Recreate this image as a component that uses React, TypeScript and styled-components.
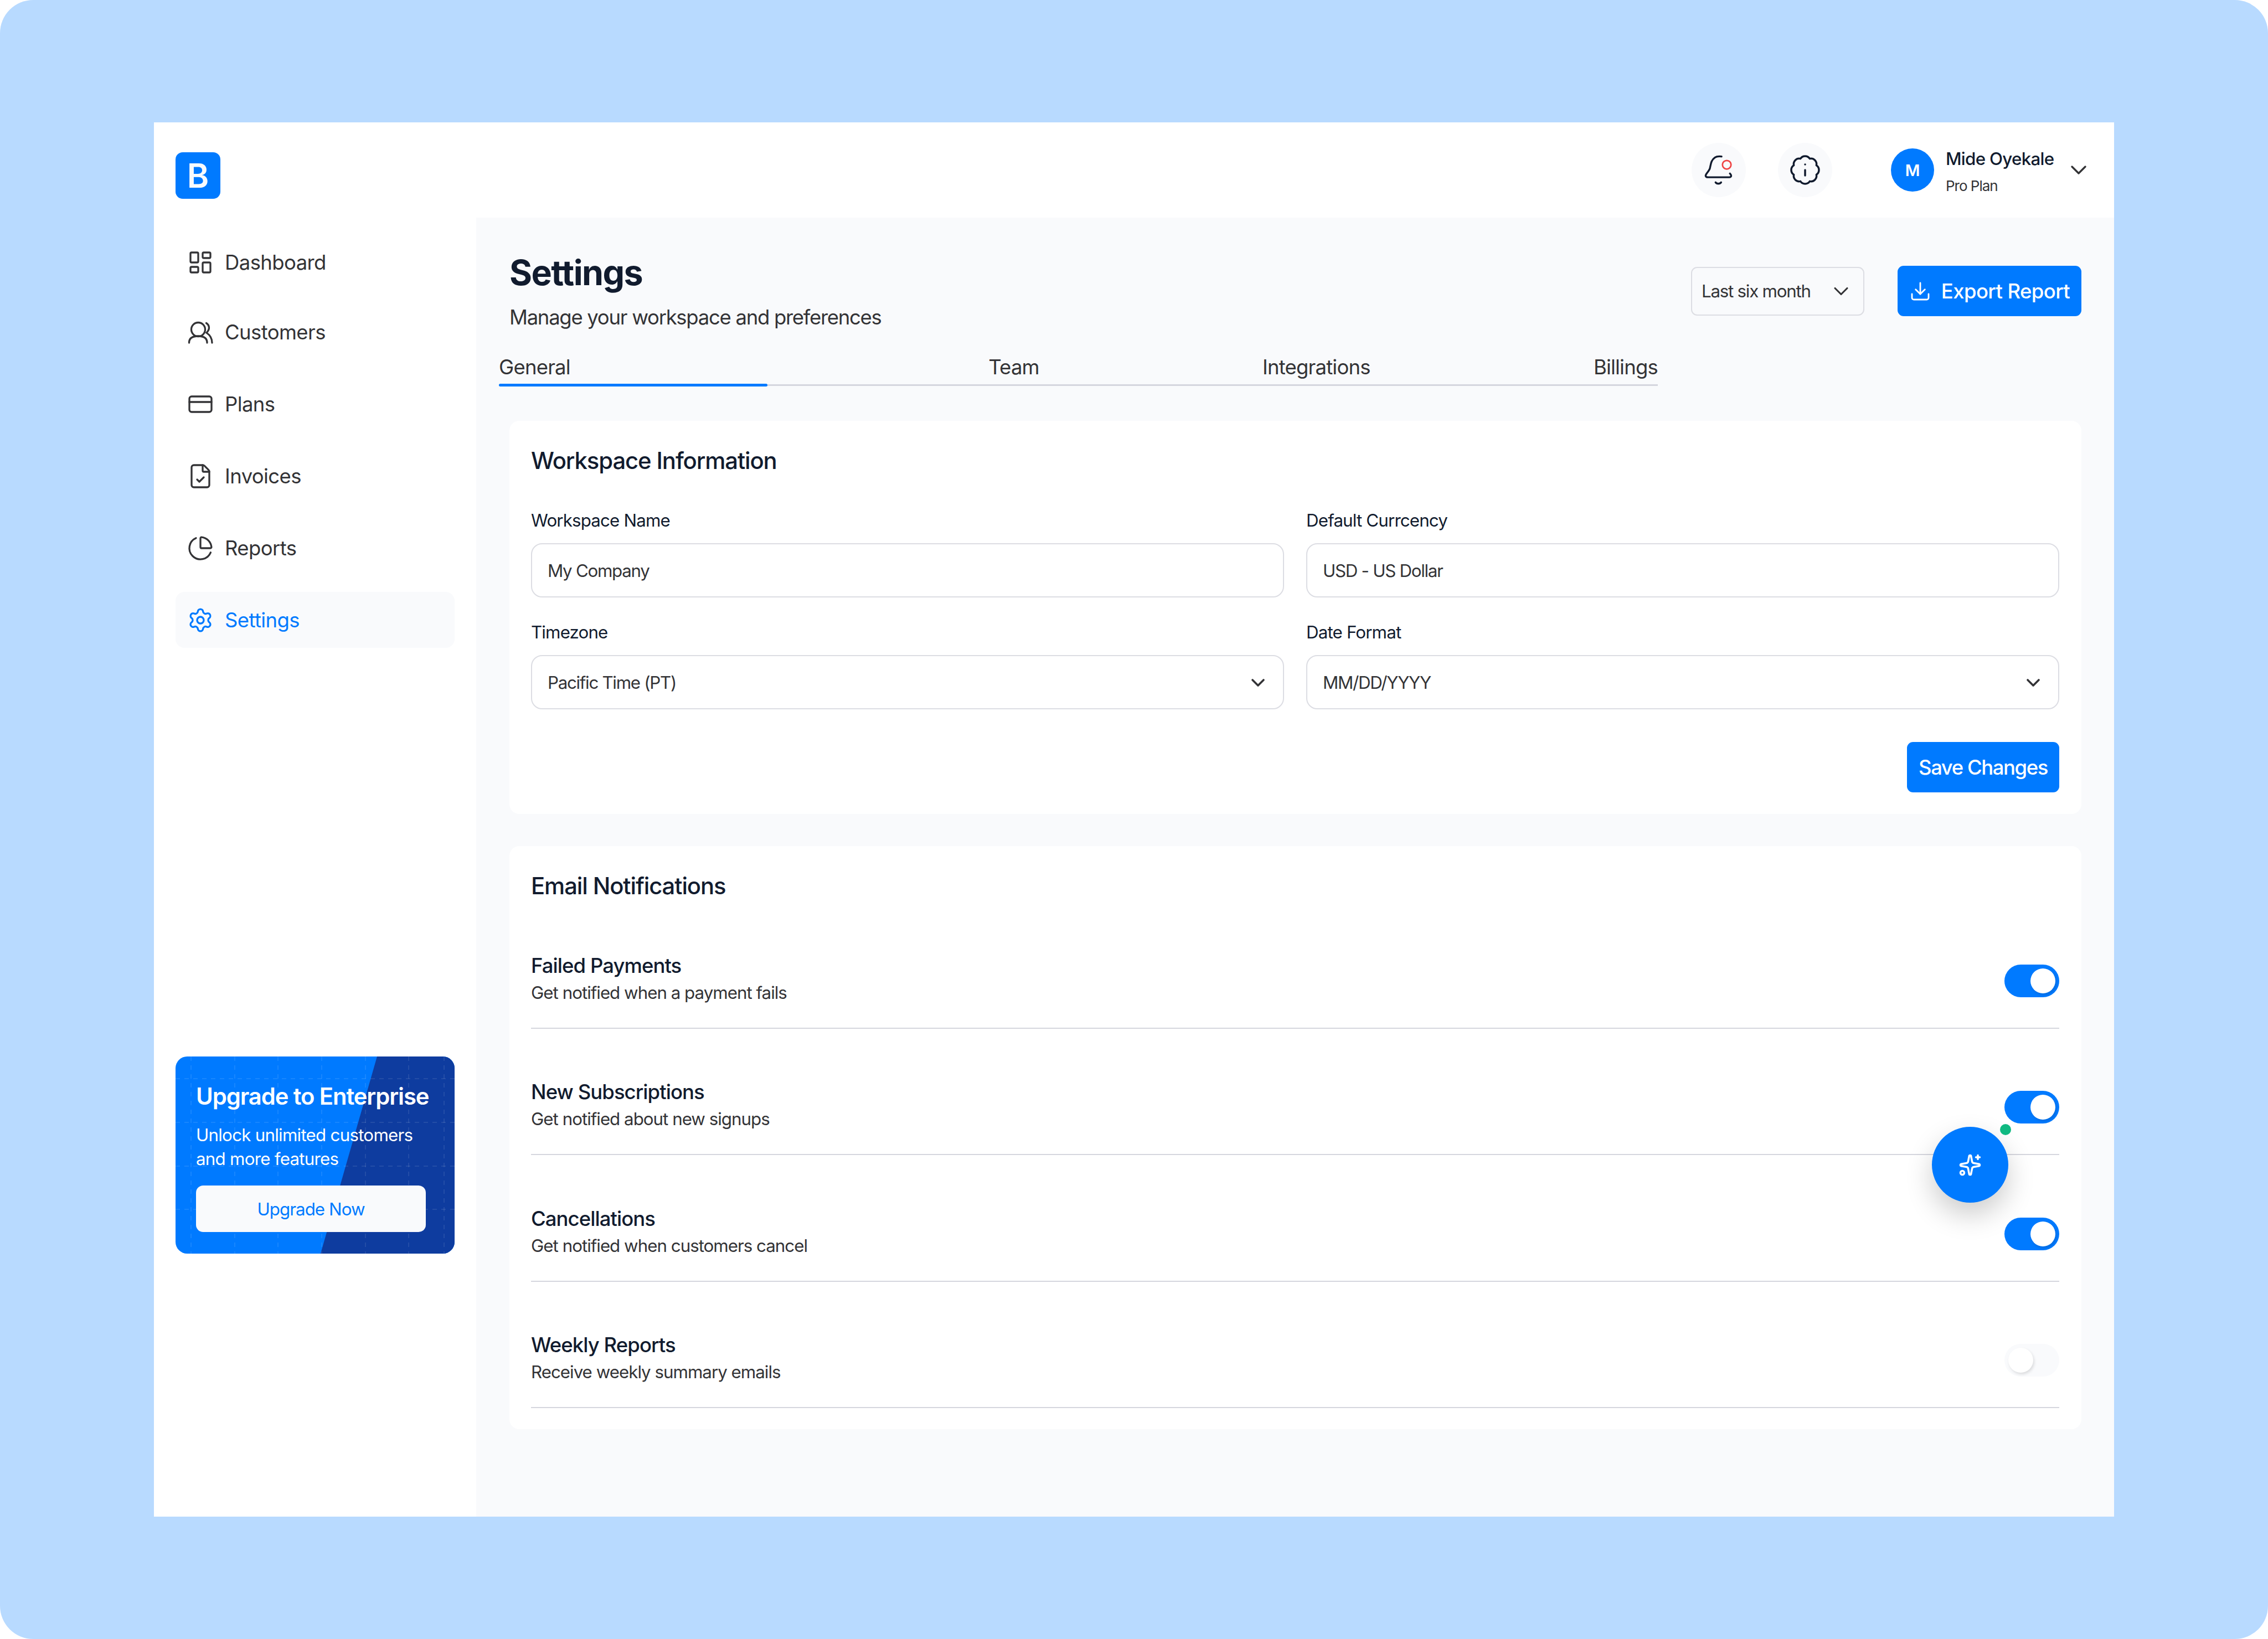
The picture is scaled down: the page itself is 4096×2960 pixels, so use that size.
import React from 'react';
import styled, { createGlobalStyle } from 'styled-components';
import {
  BadgeInfo,
  ChartPie,
  ChevronDown,
  CreditCard,
  Download,
  FileCheck,
  LayoutDashboard,
  Settings,
  Sparkles,
} from 'lucide-react';

const BLUE = '#007aff';
const INK = '#111b2e';
const BODY = '#333336';
const LINE = '#d5d6de';
const SOFT_LINE = '#dcdde3';
const PANEL = '#f9fafc';

const GlobalStyle = createGlobalStyle`
  html, body {
    margin: 0;
    padding: 0;
    background: #fff;
  }
  * {
    box-sizing: border-box;
  }
  body {
    font-family: Inter, "Liberation Sans", sans-serif;
    font-feature-settings: "calt" 0;
  }
`;

const Page = styled.div`
  width: 4096px;
  height: 2960px;
  padding: 221px 278px;
  background: #b8daff;
  border-radius: 60px;
`;

const AppWindow = styled.div`
  position: relative;
  display: flex;
  width: 3540px;
  height: 2518px;
  background: #fff;
`;

const Sidebar = styled.aside`
  display: flex;
  flex-direction: column;
  flex: 0 0 582px;
  padding: 54px 39px 475px;
`;

const Logo = styled.div`
  display: flex;
  align-items: center;
  justify-content: center;
  width: 81px;
  height: 84px;
  margin-bottom: 64px;
  border-radius: 13px;
  background: ${BLUE};
  color: ${PANEL};
  font-size: 60px;
  font-weight: 600;
`;

const Nav = styled.nav`
  display: flex;
  flex-direction: column;
  gap: 29px;
`;

const NavItem = styled.a<{ $active?: boolean }>`
  display: flex;
  align-items: center;
  gap: 20px;
  height: 101px;
  padding-left: 21px;
  border-radius: 16px;
  background: ${(p) => (p.$active ? PANEL : 'transparent')};
  color: ${(p) => (p.$active ? BLUE : BODY)};
  font-size: 36.5px;
  letter-spacing: -0.6px;

  &:first-child {
    margin-bottom: -4px;
  }
`;

const UpgradeCard = styled.div`
  position: relative;
  display: flex;
  flex-direction: column;
  height: 356px;
  margin-top: auto;
  padding: 0 37px;
  overflow: hidden;
  border-radius: 21px;
  background: ${BLUE};
  color: #fff;
`;

const UpgradeArt = styled.svg`
  position: absolute;
  inset: 0;
`;

const UpgradeTitle = styled.div`
  position: relative;
  margin-top: 47px;
  font-size: 41.8px;
  font-weight: 600;
  line-height: 50px;
  letter-spacing: -1.1px;
`;

const UpgradeText = styled.div`
  position: relative;
  margin-top: 24px;
  font-size: 31.3px;
  line-height: 43px;
  letter-spacing: -0.75px;
`;

const UpgradeButton = styled.div`
  position: relative;
  display: flex;
  align-items: center;
  justify-content: center;
  width: 415px;
  height: 84px;
  margin-top: 26px;
  padding-top: 2px;
  border-radius: 13px;
  background: ${PANEL};
  color: ${BLUE};
  font-size: 31.3px;
  letter-spacing: -0.95px;
`;

const Column = styled.div`
  display: flex;
  flex-direction: column;
  flex: 1;
  min-width: 0;
`;

const Topbar = styled.header`
  display: flex;
  align-items: center;
  justify-content: flex-end;
  flex: 0 0 172px;
  padding-right: 40px;
`;

const RoundButton = styled.div`
  display: flex;
  align-items: center;
  justify-content: center;
  width: 98px;
  height: 98px;
  margin-right: 58px;
  border-radius: 50%;
  background: ${PANEL};
  color: ${INK};

  &:nth-child(2) {
    margin-right: 106px;
  }
`;

const Avatar = styled.div`
  display: flex;
  align-items: center;
  justify-content: center;
  width: 78px;
  height: 78px;
  margin-right: 21px;
  border-radius: 50%;
  background: ${BLUE};
  color: #fff;
  font-size: 29px;
  font-weight: 600;
`;

const UserBlock = styled.div`
  display: flex;
  flex-direction: column;
  gap: 14px;
  width: 194px;
  margin-right: 22px;
  padding-top: 4px;
`;

const UserName = styled.div`
  color: ${INK};
  font-size: 31.3px;
  font-weight: 500;
  line-height: 40px;
  letter-spacing: -0.7px;
  white-space: nowrap;
`;

const UserPlan = styled.div`
  color: ${BODY};
  font-size: 26px;
  line-height: 30px;
  letter-spacing: -1px;
`;

const Main = styled.main`
  flex: 1;
  padding: 60px 59px 0 60px;
  background: ${PANEL};
`;

const Header = styled.div`
  display: flex;
  align-items: center;
  justify-content: space-between;
`;

const PageTitle = styled.h1`
  margin: 0;
  color: ${INK};
  font-size: 62.7px;
  font-weight: 700;
  line-height: 78px;
  letter-spacing: -1.6px;
`;

const PageSubtitle = styled.p`
  margin: 17px 0 0;
  color: ${BODY};
  font-size: 36.5px;
  line-height: 50px;
  letter-spacing: -1.3px;
`;

const Actions = styled.div`
  display: flex;
  align-items: center;
  gap: 60px;
`;

const PeriodSelect = styled.div`
  display: flex;
  align-items: center;
  justify-content: space-between;
  width: 313px;
  height: 88px;
  padding: 0 18px 0 17px;
  border: 2px solid ${SOFT_LINE};
  border-radius: 11px;
  color: ${BODY};
  font-size: 31.3px;
  letter-spacing: -1.25px;
`;

const PrimaryButton = styled.button`
  display: flex;
  align-items: center;
  justify-content: center;
  height: 91px;
  padding: 0;
  border: 0;
  border-radius: 11px;
  background: ${BLUE};
  color: #fff;
  font-family: inherit;
  font-size: 36.5px;
  font-weight: 500;
`;

const ExportButton = styled(PrimaryButton)`
  gap: 18px;
  width: 332px;
  letter-spacing: -0.6px;
`;

const SaveButton = styled(PrimaryButton)`
  width: 275px;
  margin: 59px 0 0 auto;
  letter-spacing: -1.45px;
`;

const Tabs = styled.div`
  display: flex;
  justify-content: space-between;
  width: 2093px;
  margin: 40px 0 63px -19px;
  border-bottom: 3px solid ${LINE};
`;

const Tab = styled.div<{ $active?: boolean }>`
  position: relative;
  width: ${(p) => (p.$active ? '485px' : 'auto')};
  margin-right: ${(p) => (p.$active ? '-4px' : '0')};
  padding-bottom: 6px;
  color: ${BODY};
  font-size: 36.5px;
  line-height: 50px;
  letter-spacing: -0.8px;

  &::after {
    content: '';
    display: ${(p) => (p.$active ? 'block' : 'none')};
    position: absolute;
    left: 0;
    right: 0;
    bottom: -4px;
    height: 5px;
    border-radius: 3px;
    background: ${BLUE};
  }
`;

const Card = styled.section<{ $height: number }>`
  height: ${(p) => p.$height}px;
  margin-bottom: 58px;
  padding: 47px 40px 0 39px;
  border-radius: 18px;
  background: #fff;
`;

const CardForm = styled(Card)`
  display: flex;
  flex-direction: column;
`;

const CardTitle = styled.h2`
  margin: 0;
  color: ${INK};
  font-size: 41.8px;
  font-weight: 500;
  line-height: 50px;
  letter-spacing: -1.1px;
`;

const FieldGrid = styled.div`
  display: grid;
  grid-template-columns: 1fr 1fr;
  gap: 43px 40px;
  margin-top: 63px;
`;

const Field = styled.div`
  display: flex;
  flex-direction: column;
  gap: 21px;
`;

const FieldLabel = styled.label`
  color: ${INK};
  font-size: 31.3px;
  line-height: 40px;
  letter-spacing: -0.85px;
`;

const FieldBox = styled.div`
  display: flex;
  align-items: center;
  justify-content: space-between;
  height: 98px;
  padding: 2px 25px 0 28px;
  border: 2px solid ${SOFT_LINE};
  border-radius: 20px;
  background: #fff;
  color: ${BODY};
  font-size: 31.3px;
  letter-spacing: -1.3px;
`;

const NoticeRow = styled.div`
  display: flex;
  align-items: center;
  justify-content: space-between;
  height: 228.5px;
  padding: 90px 0 43px;
  border-bottom: 2px solid ${LINE};

  &:first-of-type {
    margin-top: 4px;
  }
`;

const NoticeText = styled.div`
  display: flex;
  flex-direction: column;
  gap: 4px;
`;

const NoticeTitle = styled.div`
  color: ${INK};
  font-size: 36.5px;
  font-weight: 500;
  line-height: 50px;
  letter-spacing: -0.95px;
`;

const NoticeHint = styled.div`
  color: ${BODY};
  font-size: 31.3px;
  line-height: 40px;
  letter-spacing: -1px;
`;

const Toggle = styled.div<{ $on: boolean }>`
  display: flex;
  align-items: center;
  justify-content: ${(p) => (p.$on ? 'flex-end' : 'flex-start')};
  width: 99px;
  height: 59px;
  margin-top: 11px;
  padding: 0 7px;
  border-radius: 30px;
  background: ${(p) => (p.$on ? BLUE : PANEL)};

  &::after {
    content: '';
    width: 45px;
    height: 45px;
    border-radius: 50%;
    background: #fff;
    box-shadow: 2px 3px 5px rgba(0, 0, 0, 0.12);
  }
`;

const AssistantButton = styled.div`
  position: absolute;
  right: 191px;
  bottom: 567px;
  display: flex;
  align-items: center;
  justify-content: center;
  width: 138px;
  height: 137px;
  border-radius: 50%;
  background: ${BLUE};
  color: #fff;
  box-shadow: 0 22px 50px rgba(0, 0, 0, 0.2);
`;

const OnlineDot = styled.span`
  position: absolute;
  top: -5px;
  left: 123px;
  width: 20px;
  height: 20px;
  border-radius: 50%;
  background: #10b981;
`;

const navIcon = { size: 48, strokeWidth: 1.65 };

const CustomersIcon = () => (
  <svg width="48" height="48" viewBox="0 0 48 48" fill="none" stroke="currentColor" strokeWidth="3.3" strokeLinecap="round">
    <circle cx="20" cy="19" r="12.5" />
    <path d="M3.5 43C3.5 34 10 31 20 31C30 31 36 34 36 43" />
    <path d="M34.5 7.5C40 11 42 18 35 25C41 29 45 35 45 43" />
  </svg>
);

const BellIcon = () => (
  <svg width="54" height="54" viewBox="80 90 160 160" fill="none" strokeLinecap="round">
    <path
      d="M175 98C160 96 150 96 140 103C118 118 118 140 113 160C110 175 90 190 90 200C90 207 96 209 104 209L215 209C224 209 228 204 226 198C225 194 222 191 220 189"
      stroke="currentColor"
      strokeWidth="10"
    />
    <path d="M143 236C150 246 166 246 173 236" stroke="currentColor" strokeWidth="10" />
    <circle cx="203" cy="142" r="23" stroke="#ef4444" strokeWidth="8" />
  </svg>
);

const gridX = [28, 107, 185, 264, 343, 421, 485];
const gridY = [40, 119, 198, 276];

const navItems = [
  { label: 'Dashboard', icon: <LayoutDashboard {...navIcon} /> },
  { label: 'Customers', icon: <CustomersIcon /> },
  { label: 'Plans', icon: <CreditCard {...navIcon} /> },
  { label: 'Invoices', icon: <FileCheck {...navIcon} /> },
  { label: 'Reports', icon: <ChartPie {...navIcon} /> },
  { label: 'Settings', icon: <Settings {...navIcon} />, active: true },
];

const notices = [
  { title: 'Failed Payments', hint: 'Get notified when a payment fails', on: true },
  { title: 'New Subscriptions', hint: 'Get notified about new signups', on: true },
  { title: 'Cancellations', hint: 'Get notified when customers cancel', on: true },
  { title: 'Weekly Reports', hint: 'Receive weekly summary emails', on: false },
];

export default function App() {
  return (
    <>
      <GlobalStyle />
      <Page>
        <AppWindow>
          <Sidebar>
            <Logo>B</Logo>
            <Nav>
              {navItems.map((item) => (
                <NavItem key={item.label} $active={item.active}>
                  {item.icon}
                  {item.label}
                </NavItem>
              ))}
            </Nav>
            <UpgradeCard>
              <UpgradeArt width="504" height="356" viewBox="0 0 504 356">
                <polygon points="364,0 504,0 504,356 262,356" fill="#0e3c9f" />
                {gridX.map((x) => (
                  <line key={x} x1={x} y1="0" x2={x} y2="356" stroke="#fff" strokeOpacity="0.09" strokeWidth="2" strokeDasharray="8 8" />
                ))}
                {gridY.map((y) => (
                  <line key={y} x1="0" y1={y} x2="504" y2={y} stroke="#fff" strokeOpacity="0.09" strokeWidth="2" strokeDasharray="8 8" />
                ))}
              </UpgradeArt>
              <UpgradeTitle>Upgrade to Enterprise</UpgradeTitle>
              <UpgradeText>
                Unlock unlimited customers
                <br />
                and more features
              </UpgradeText>
              <UpgradeButton>Upgrade Now</UpgradeButton>
            </UpgradeCard>
          </Sidebar>

          <Column>
            <Topbar>
              <RoundButton>
                <BellIcon />
              </RoundButton>
              <RoundButton>
                <BadgeInfo size={60} strokeWidth={1.4} />
              </RoundButton>
              <Avatar>M</Avatar>
              <UserBlock>
                <UserName>Mide Oyekale</UserName>
                <UserPlan>Pro Plan</UserPlan>
              </UserBlock>
              <ChevronDown size={48} strokeWidth={1.7} color={BODY} />
            </Topbar>

            <Main>
              <Header>
                <div>
                  <PageTitle>Settings</PageTitle>
                  <PageSubtitle>Manage your workspace and preferences</PageSubtitle>
                </div>
                <Actions>
                  <PeriodSelect>
                    Last six month
                    <ChevronDown size={44} strokeWidth={1.7} />
                  </PeriodSelect>
                  <ExportButton>
                    <Download size={40} strokeWidth={1.7} />
                    Export Report
                  </ExportButton>
                </Actions>
              </Header>

              <Tabs>
                <Tab $active>General</Tab>
                <Tab>Team</Tab>
                <Tab>Integrations</Tab>
                <Tab>Billings</Tab>
              </Tabs>

              <CardForm $height={710}>
                <CardTitle>Workspace Information</CardTitle>
                <FieldGrid>
                  <Field>
                    <FieldLabel>Workspace Name</FieldLabel>
                    <FieldBox>My Company</FieldBox>
                  </Field>
                  <Field>
                    <FieldLabel>Default Currcency</FieldLabel>
                    <FieldBox>USD - US Dollar</FieldBox>
                  </Field>
                  <Field>
                    <FieldLabel>Timezone</FieldLabel>
                    <FieldBox>
                      Pacific Time (PT)
                      <ChevronDown size={40} strokeWidth={2.2} />
                    </FieldBox>
                  </Field>
                  <Field>
                    <FieldLabel>Date Format</FieldLabel>
                    <FieldBox>
                      MM/DD/YYYY
                      <ChevronDown size={40} strokeWidth={2.2} />
                    </FieldBox>
                  </Field>
                </FieldGrid>
                <SaveButton>Save Changes</SaveButton>
              </CardForm>

              <Card $height={1053}>
                <CardTitle>Email Notifications</CardTitle>
                {notices.map((notice) => (
                  <NoticeRow key={notice.title}>
                    <NoticeText>
                      <NoticeTitle>{notice.title}</NoticeTitle>
                      <NoticeHint>{notice.hint}</NoticeHint>
                    </NoticeText>
                    <Toggle $on={notice.on} />
                  </NoticeRow>
                ))}
              </Card>
            </Main>
          </Column>

          <AssistantButton>
            <OnlineDot />
            <Sparkles size={42} strokeWidth={2} />
          </AssistantButton>
        </AppWindow>
      </Page>
    </>
  );
}
